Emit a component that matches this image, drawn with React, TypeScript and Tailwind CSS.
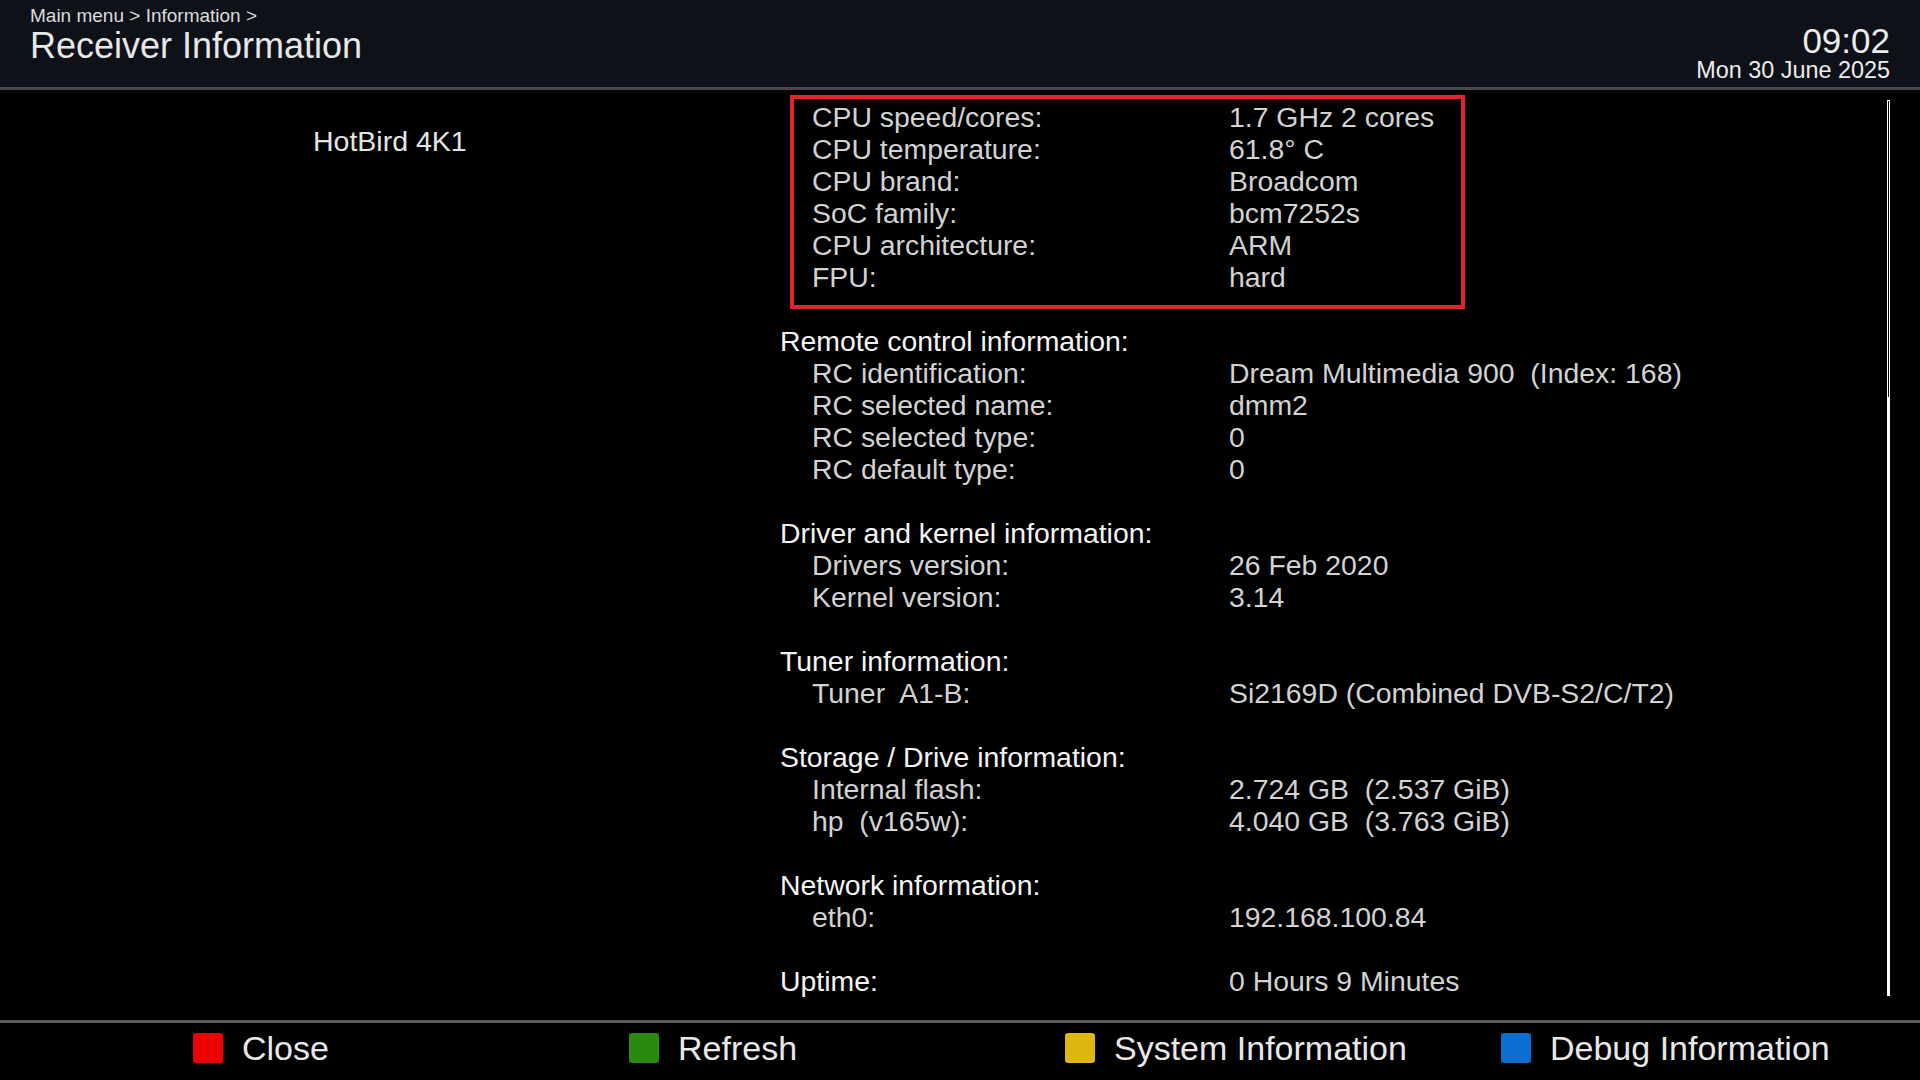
import React from "react";

type Row =
  | { kind: "entry"; label: string; value: string }
  | { kind: "header"; label: string; value?: string }
  | { kind: "blank" };

const rows: Row[] = [
  { kind: "entry", label: "CPU speed/cores:", value: "1.7 GHz 2 cores" },
  { kind: "entry", label: "CPU temperature:", value: "61.8° C" },
  { kind: "entry", label: "CPU brand:", value: "Broadcom" },
  { kind: "entry", label: "SoC family:", value: "bcm7252s" },
  { kind: "entry", label: "CPU architecture:", value: "ARM" },
  { kind: "entry", label: "FPU:", value: "hard" },
  { kind: "blank" },
  { kind: "header", label: "Remote control information:" },
  { kind: "entry", label: "RC identification:", value: "Dream Multimedia 900  (Index: 168)" },
  { kind: "entry", label: "RC selected name:", value: "dmm2" },
  { kind: "entry", label: "RC selected type:", value: "0" },
  { kind: "entry", label: "RC default type:", value: "0" },
  { kind: "blank" },
  { kind: "header", label: "Driver and kernel information:" },
  { kind: "entry", label: "Drivers version:", value: "26 Feb 2020" },
  { kind: "entry", label: "Kernel version:", value: "3.14" },
  { kind: "blank" },
  { kind: "header", label: "Tuner information:" },
  { kind: "entry", label: "Tuner  A1-B:", value: "Si2169D (Combined DVB-S2/C/T2)" },
  { kind: "blank" },
  { kind: "header", label: "Storage / Drive information:" },
  { kind: "entry", label: "Internal flash:", value: "2.724 GB  (2.537 GiB)" },
  { kind: "entry", label: "hp  (v165w):", value: "4.040 GB  (3.763 GiB)" },
  { kind: "blank" },
  { kind: "header", label: "Network information:" },
  { kind: "entry", label: "eth0:", value: "192.168.100.84" },
  { kind: "blank" },
  { kind: "header", label: "Uptime:", value: "0 Hours 9 Minutes" },
];

const buttons = [
  { color: "bg-[#ee0000]", label: "Close" },
  { color: "bg-[#2a8a0e]", label: "Refresh" },
  { color: "bg-[#dcb80e]", label: "System Information" },
  { color: "bg-[#0c6fd2]", label: "Debug Information" },
];

export default function App() {
  return (
    <div className="w-[1920px] h-[1080px] bg-black flex flex-col overflow-hidden font-['Liberation_Sans',Arial,sans-serif]">
      {/* Header */}
      <div className="h-[87px] bg-[#0e1118] flex justify-between pl-[30px] pr-[30px] shrink-0">
        <div className="flex flex-col pt-[5px]">
          <div className="text-[19px] leading-[22px] text-[#dcdcdc]">Main menu &gt; Information &gt;</div>
          <div className="text-[36px] leading-[38px] text-[#e8e8e8]">Receiver Information</div>
        </div>
        <div className="flex flex-col items-end pt-[23px]">
          <div className="text-[35px] leading-[36px] text-[#ececec]">09:02</div>
          <div className="text-[23.4px] leading-[23px] text-[#ececec]">Mon 30 June 2025</div>
        </div>
      </div>
      <div className="h-[3px] bg-[#48484e] shrink-0" />

      {/* Main */}
      <div className="relative flex-1 flex">
        <div className="w-[780px] shrink-0 pt-[35px] pl-[313px]">
          <div className="text-[28.5px] leading-[32px] text-[#e4e4e4] whitespace-nowrap">HotBird 4K1</div>
        </div>
        <div className="flex-1 flex flex-col pt-[11px] text-[28.4px] leading-[32px]">
          {rows.map((r, i) => {
            if (r.kind === "blank") return <div key={i} className="h-[32px]" />;
            if (r.kind === "header")
              return (
                <div key={i} className="flex h-[32px] text-[#f4f4f4]">
                  <div className="w-[449px] shrink-0 whitespace-pre">{r.label}</div>
                  {r.value && <div className="whitespace-pre text-[#d2d2d2]">{r.value}</div>}
                </div>
              );
            return (
              <div key={i} className="flex h-[32px] text-[#d2d2d2]">
                <div className="w-[449px] shrink-0 pl-[32px] whitespace-pre">{r.label}</div>
                <div className="whitespace-pre">{r.value}</div>
              </div>
            );
          })}
        </div>
        {/* Scrollbar */}
        <div className="w-[3px] mr-[30px] mt-[10px] h-[896px] bg-white flex flex-col shrink-0">
          <div className="h-[298px] border border-white bg-black" />
        </div>
        {/* Red annotation box */}
        <div className="absolute left-[790px] top-[5px] w-[675px] h-[214px] border-[4px] border-[#e3222b] pointer-events-none" />
      </div>

      <div className="h-[3px] bg-[#5a5a5f] shrink-0" />
      {/* Footer */}
      <div className="h-[57px] flex pl-[193px] pt-[10px] shrink-0">
        {buttons.map((b) => (
          <div key={b.label} className="w-[436px] shrink-0 h-[30px] flex items-center gap-[19px]">
            <div className={`w-[30px] h-[30px] shrink-0 rounded-[3px] ${b.color} shadow-[0_0_2px_1px_rgba(0,0,0,0.6)]`} />
            <div className="text-[34px] leading-[36px] text-[#e8e8e8] whitespace-nowrap">{b.label}</div>
          </div>
        ))}
      </div>
    </div>
  );
}
